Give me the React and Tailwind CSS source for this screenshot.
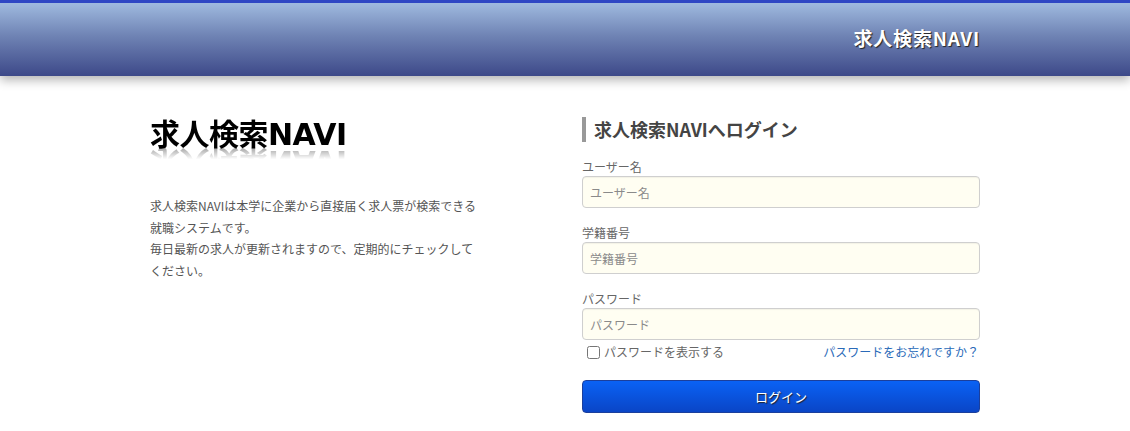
const inputCls =
  "h-8 w-full rounded border border-[#cfcfcf] bg-[#fffef2] px-[7px] text-[12px] text-[#555] placeholder:text-[#8a8a8a] outline-none shadow-[inset_0_1px_1px_rgba(0,0,0,0.05)]";

const Field = ({ label, placeholder, type = "text", className = "" }) => (
  <div className={className}>
    <label className="block text-[12px] leading-[19px] text-[#666]">{label}</label>
    <input type={type} placeholder={placeholder} className={inputCls} />
  </div>
);

export default function App() {
  return (
    <div className="min-h-[431px] bg-white font-['Noto_Sans_CJK_JP','Noto_Sans',sans-serif]">
      <header className="relative z-10 h-[76px] border-t-[3px] border-[#2e47c4] bg-[linear-gradient(to_bottom,#9fbadf,#6f83b4_45%,#3d4989)] shadow-[0_4px_10px_rgba(0,0,0,0.3)]">
        <div className="mx-auto flex h-full w-[830px] items-center justify-end pb-[3px]">
          <span className="text-[19px] font-bold tracking-[0.8px] text-white [text-shadow:1px_1px_1px_#222]">
            求人検索NAVI
          </span>
        </div>
      </header>

      <main className="mx-auto flex w-[830px] justify-between pt-[41px]">
        <section className="w-[360px]">
          <h1 className="font-['DejaVu_Sans','Noto_Sans_CJK_JP',sans-serif] text-[30px] font-bold leading-[36px] tracking-[-0.5px] text-black [-webkit-box-reflect:below_-10px_linear-gradient(transparent_55%,rgba(255,255,255,0.5))]">
            求人検索NAVI
          </h1>
          <p className="mt-[42px] whitespace-nowrap text-[12px] leading-[21.5px] text-[#555]">
            求人検索NAVIは本学に企業から直接届く求人票が検索できる
            <br />
            就職システムです。
            <br />
            毎日最新の求人が更新されますので、定期的にチェックして
            <br />
            ください。
          </p>
        </section>

        <section className="w-[398px]">
          <h2 className="border-l-[4px] border-[#999] pl-2 text-[18px] font-bold leading-[25px] text-[#444]">
            求人検索NAVIへログイン
          </h2>
          <Field label="ユーザー名" placeholder="ユーザー名" className="mt-[15px]" />
          <Field label="学籍番号" placeholder="学籍番号" className="mt-[15px]" />
          <Field label="パスワード" placeholder="パスワード" type="password" className="mt-[15px]" />
          <div className="mt-[3px] flex h-[18px] items-center justify-between pl-[5px] pr-[1px]">
            <label className="flex items-center gap-1 text-[12px] text-[#666]">
              <input type="checkbox" className="h-[13px] w-[13px] accent-[#888]" />
              パスワードを表示する
            </label>
            <a href="#" className="text-[12px] text-[#2a6ab8]">
              パスワードをお忘れですか？
            </a>
          </div>
          <button
            type="button"
            className="mt-[19px] h-[33px] w-full rounded border border-[#1b3f9c] bg-[linear-gradient(to_bottom,#0a62f5,#0a45c6)] text-[13px] text-white [text-shadow:1px_1px_1px_#222]"
          >
            ログイン
          </button>
        </section>
      </main>
    </div>
  );
}
